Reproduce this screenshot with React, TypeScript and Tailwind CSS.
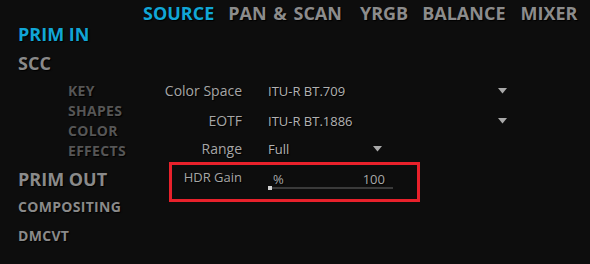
import React from "react";

const Caret = () => (
  <svg width="9" height="6" viewBox="0 0 9 6" className="shrink-0">
    <polygon points="0,0 9,0 4.5,5.5" fill="#a9a9a9" />
  </svg>
);

export default function App() {
  return (
    <div className="w-[590px] h-[264px] bg-[#0d0d0d] flex overflow-hidden font-['Open_Sans',sans-serif] [text-shadow:1px_1px_1px_#000]">
      {/* Left navigation */}
      <aside className="w-[140px] shrink-0 pl-[18px] pt-[22px] flex flex-col">
        <div className="text-[18px] leading-6 font-bold text-[#11a6d6]">PRIM IN</div>
        <div className="mt-[5px] text-[18px] leading-6 font-bold text-[#8a8a8a]">SCC</div>
        <ul className="mt-[6px] pl-[50px] text-[14px] leading-5 font-bold tracking-[0.3px] text-[#565656]">
          <li>KEY</li>
          <li>SHAPES</li>
          <li>COLOR</li>
          <li>EFFECTS</li>
        </ul>
        <div className="mt-[6px] text-[18px] leading-6 font-bold text-[#8a8a8a]">PRIM OUT</div>
        <div className="mt-[6px] text-[14px] leading-5 font-bold tracking-[0.3px] text-[#8a8a8a]">COMPOSITING</div>
        <div className="mt-[9px] text-[14px] leading-5 font-bold tracking-[0.3px] text-[#8a8a8a]">DMCVT</div>
      </aside>

      <main className="flex-1 flex flex-col pt-[1px]">
        {/* Tabs */}
        <nav className="h-6 pl-[3px] flex text-[18px] leading-6 font-bold whitespace-nowrap [word-spacing:2px] text-[#8c8c8c]">
          <span className="text-[#11a6d6]">SOURCE</span>
          <span className="ml-[14px]">PAN &amp; SCAN</span>
          <span className="ml-[18px]">YRGB</span>
          <span className="ml-[14px]">BALANCE</span>
          <span className="ml-[15px]">MIXER</span>
        </nav>

        {/* Parameters */}
        <div className="mt-[56px] flex flex-col">
          <div className="h-5 flex items-center">
            <span className="w-[102px] text-right text-[14px] leading-5 text-[#a6a6a6]">Color Space</span>
            <div className="ml-[26px] w-[239px] flex items-center justify-between">
              <span className="text-[13px] leading-5 text-[#b2b2b2]">ITU-R BT.709</span>
              <Caret />
            </div>
          </div>
          <div className="mt-[10px] h-5 flex items-center">
            <span className="w-[102px] text-right text-[14px] leading-5 text-[#a6a6a6]">EOTF</span>
            <div className="ml-[26px] w-[239px] flex items-center justify-between">
              <span className="text-[13px] leading-5 text-[#b2b2b2]">ITU-R BT.1886</span>
              <Caret />
            </div>
          </div>
          <div className="mt-[8px] h-5 flex items-center">
            <span className="w-[102px] text-right text-[14px] leading-5 text-[#a6a6a6]">Range</span>
            <div className="ml-[26px] w-[114px] flex items-center justify-between">
              <span className="text-[13px] leading-5 text-[#b2b2b2]">Full</span>
              <Caret />
            </div>
          </div>

          {/* HDR Gain, highlighted */}
          <div className="mt-[3px] ml-[29px] w-[251px] h-[40px] border-[3px] border-[#e8212b] flex items-start">
            <span className="mt-[2px] w-[70px] text-right text-[13px] leading-5 text-[#a6a6a6]">HDR Gain</span>
            <div className="mt-[6px] ml-[26px] w-[125px] flex flex-col">
              <div className="h-4 pl-[5px] pr-[8px] flex justify-between text-[13px] leading-4 text-[#a9a9a9]">
                <span>%</span>
                <span>100</span>
              </div>
              <div className="relative h-[2px] ml-[2px] bg-[#3a3a3a]">
                <div className="absolute -left-[2px] -top-[1px] w-[4px] h-[4px] bg-[#cfcfcf]" />
              </div>
            </div>
          </div>
        </div>
      </main>
    </div>
  );
}
